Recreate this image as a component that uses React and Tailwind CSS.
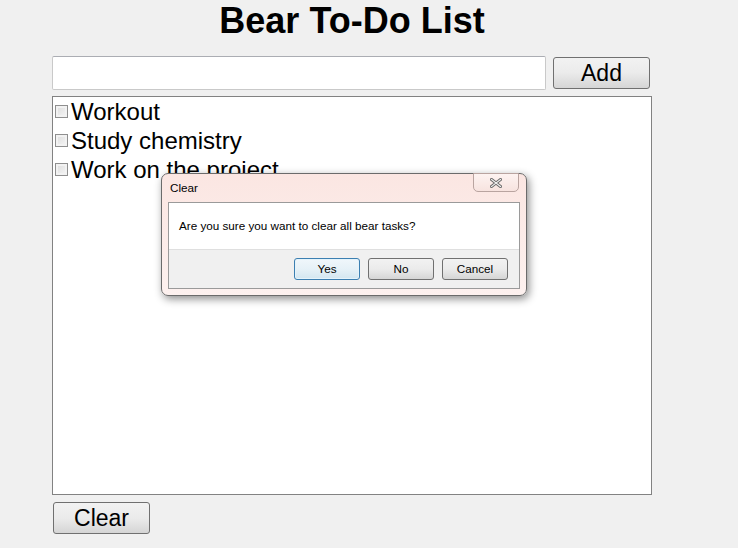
import React from 'react';

const tasks = ['Workout', 'Study chemistry', 'Work on the project'];

const btn =
  'rounded-[3px] border border-[#707070] bg-gradient-to-b from-[#f2f2f2] via-[#ebebeb] to-[#d5d5d5] text-black';

const DialogButton = ({ children, primary }) => (
  <button
    className={`w-[66px] h-[22px] rounded-[3px] border text-[11.7px] leading-none bg-gradient-to-b ${
      primary
        ? 'border-[#3c7fb1] from-[#f0f7fb] via-[#e6f1f7] to-[#d3e6f0] shadow-[inset_0_0_0_1px_#e4f3fb]'
        : 'border-[#707070] from-[#f2f2f2] via-[#ebebeb] to-[#d5d5d5]'
    }`}
  >
    {children}
  </button>
);

const ConfirmDialog = () => (
  <div className="absolute left-[161px] top-[173px] w-[366px] h-[123px] rounded-[7px] border border-[#6b6b6b] bg-gradient-to-b from-[#fbe6e2] to-[#fdf1ef] shadow-[2px_3px_8px_rgba(0,0,0,0.45)] px-[6px] flex flex-col">
    <div className="flex items-start h-[28px]">
      <span className="pt-[7px] pl-[2px] text-[11.7px] leading-[14px] text-black">Clear</span>
      <div className="ml-auto mr-[1px] -mt-px w-[46px] h-[19px] rounded-b-[5px] border border-[#b9a4a0] bg-gradient-to-b from-[#fdf3f1] to-[#f7e3df] flex items-center justify-center">
        <svg width="12" height="10" viewBox="0 0 12 10">
          <path d="M1.5 1.5 L10.5 8.5 M10.5 1.5 L1.5 8.5" stroke="#6a6a6a" strokeWidth="3" strokeLinecap="square" />
          <path d="M1.5 1.5 L10.5 8.5 M10.5 1.5 L1.5 8.5" stroke="#f4f4f4" strokeWidth="1.1" strokeLinecap="square" />
        </svg>
      </div>
    </div>
    <div className="flex-1 mb-[6px] border border-[#9a9a9a] flex flex-col">
      <div className="h-[46px] bg-white flex items-center pl-[10px] text-[11.7px] text-black">
        Are you sure you want to clear all bear tasks?
      </div>
      <div className="flex-1 bg-[#f0f0f0] border-t border-[#dfdfdf] flex items-center justify-end gap-[8px] pr-[11px]">
        <DialogButton primary>Yes</DialogButton>
        <DialogButton>No</DialogButton>
        <DialogButton>Cancel</DialogButton>
      </div>
    </div>
  </div>
);

export default function App() {
  return (
    <div
      className="relative w-[738px] h-[548px] bg-[#f0f0f0] overflow-hidden"
      style={{ fontFamily: '"Liberation Sans", Arial, sans-serif' }}
    >
      <div className="ml-[52px] w-[600px] flex flex-col">
        <h1 className="mt-[1px] h-[40px] text-center text-[36px] leading-[40px] font-bold text-black">
          Bear To-Do List
        </h1>
        <div className="mt-[15px] flex items-center gap-[7px]">
          <input
            type="text"
            className="w-[494px] h-[34px] rounded-[2px] border border-[#c9c9c9] border-t-[#abadb3] bg-white outline-none px-1 text-[20px]"
          />
          <button className={`${btn} w-[97px] h-[32px] text-[23px] leading-none`}>Add</button>
        </div>
        <div className="mt-[6px] h-[399px] border border-[#828282] bg-white flex flex-col">
          {tasks.map((t) => (
            <label key={t} className="flex items-center h-[29px] pl-[2px] text-[24px] leading-[29px] text-black">
              <span className="w-[13px] h-[13px] border border-[#8f8f8f] bg-gradient-to-br from-[#dcdcdc] to-[#f6f6f6] shadow-[inset_0_0_0_2px_#f2f2f2] mr-[3px] shrink-0" />
              {t}
            </label>
          ))}
        </div>
        <div className="mt-[7px] ml-px">
          <button className={`${btn} w-[97px] h-[32px] text-[23px] leading-none`}>Clear</button>
        </div>
      </div>
      <ConfirmDialog />
    </div>
  );
}
